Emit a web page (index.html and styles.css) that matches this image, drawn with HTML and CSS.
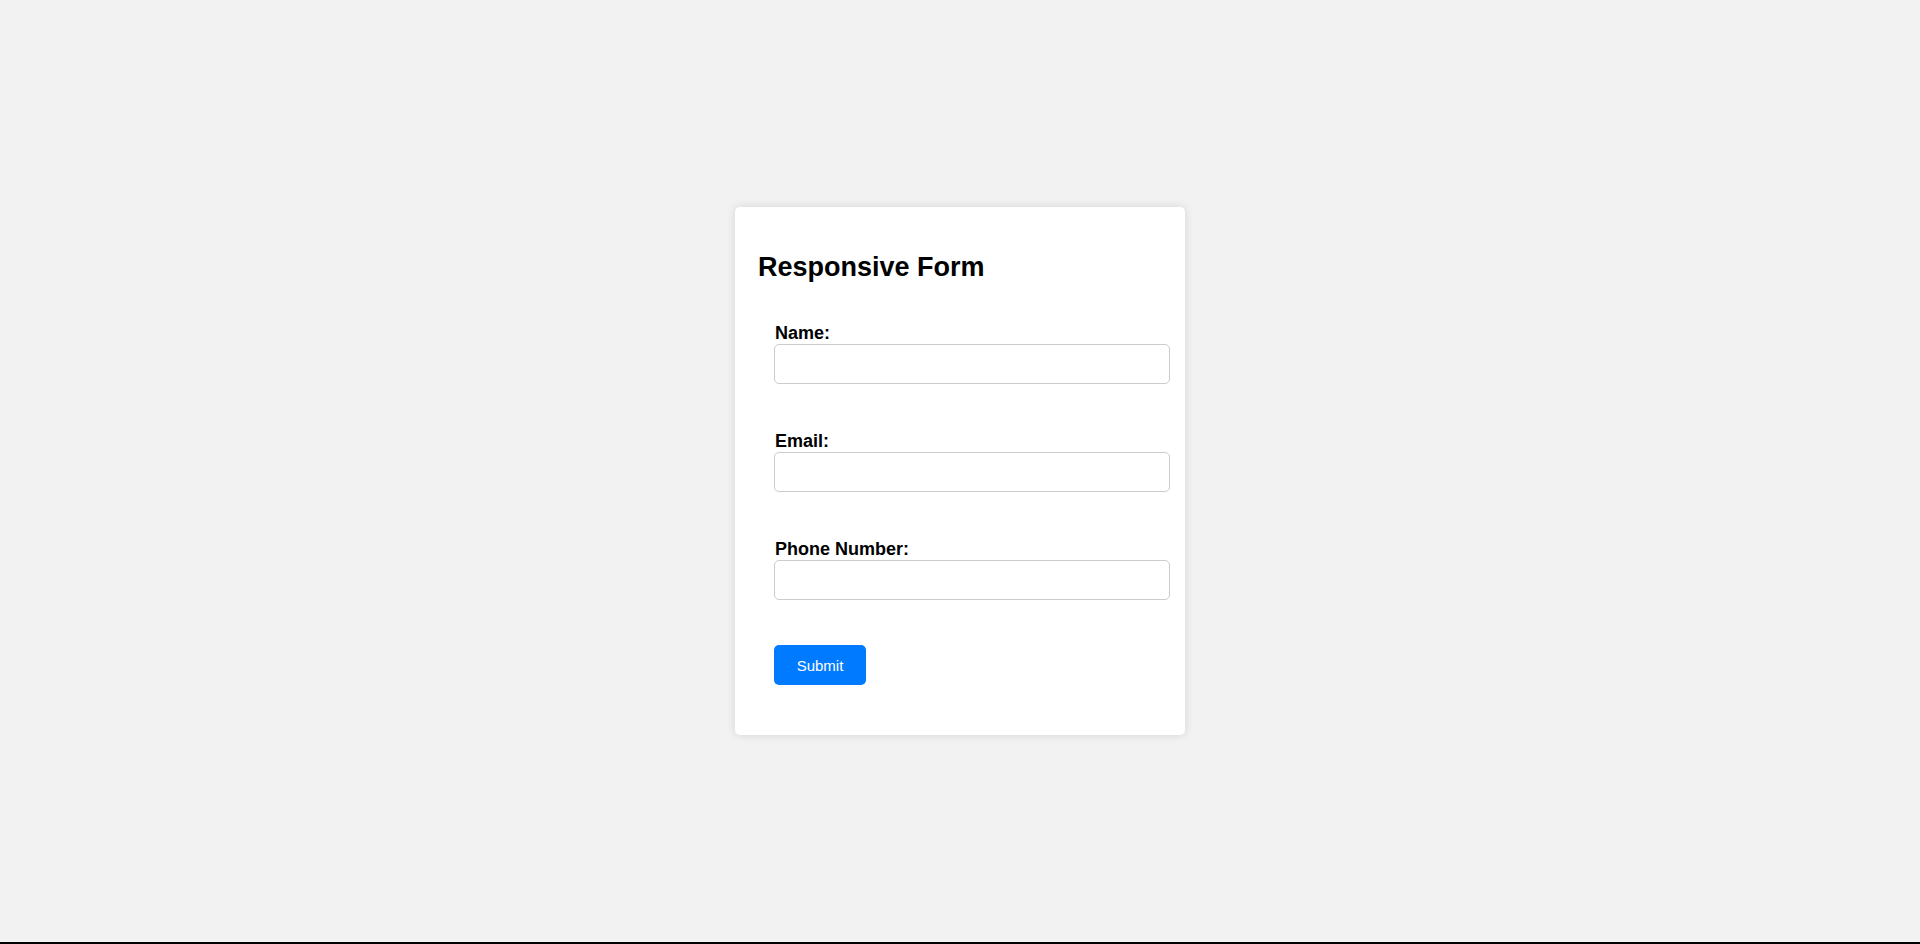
FILE: index.html
```html
<!DOCTYPE html>
<html lang="en">
<head>
<meta charset="UTF-8">
<title>Responsive Form</title>
<link rel="stylesheet" href="styles.css">
</head>
<body>
  <div class="card">
    <h2 class="title">Responsive Form</h2>
    <form class="form">
      <div class="group">
        <label for="name">Name:</label>
        <input type="text" id="name">
      </div>
      <div class="group">
        <label for="email">Email:</label>
        <input type="email" id="email">
      </div>
      <div class="group group-last">
        <label for="phone">Phone Number:</label>
        <input type="tel" id="phone">
      </div>
      <button type="button" class="submit">Submit</button>
    </form>
  </div>
</body>
</html>
```
FILE: styles.css
```css
html, body {
  margin: 0;
  padding: 0;
}
body {
  background: #f2f2f2;
  font-family: "Liberation Sans", Arial, sans-serif;
  height: calc(100vh - 2px);
  border-bottom: 2px solid #000;
  display: flex;
  align-items: center;
  justify-content: center;
}
.card {
  width: 450px;
  box-sizing: border-box;
  background: #fff;
  padding: 20px;
  border-radius: 5px;
  box-shadow: 0 0 10px rgba(0, 0, 0, 0.12);
}
.title {
  margin: 25px 0 39px 3px;
  font-size: 27px;
  line-height: 31px;
  font-weight: bold;
  color: #000;
}
.form {
  padding-left: 19px;
}
.group {
  margin-bottom: 46.5px;
}
.group-last {
  margin-bottom: 45px;
}
.group label {
  display: block;
  font-size: 18px;
  line-height: 20.5px;
  padding-top: 1px;
  font-weight: bold;
  color: #000;
  margin-bottom: 0;
  padding-left: 1px;
}
.group input {
  display: block;
  width: 396px;
  height: 40px;
  box-sizing: border-box;
  border: 1px solid #ccc;
  border-radius: 5px;
  padding: 8px;
  font-size: 16px;
  font-family: inherit;
  background: #fff;
}
.submit {
  display: block;
  width: 92px;
  height: 40px;
  margin-bottom: 30px;
  background: #007bff;
  color: #fff;
  border: none;
  border-radius: 5px;
  font-family: inherit;
  font-size: 15px;
  padding: 2px 0 0;
  cursor: pointer;
}
```
